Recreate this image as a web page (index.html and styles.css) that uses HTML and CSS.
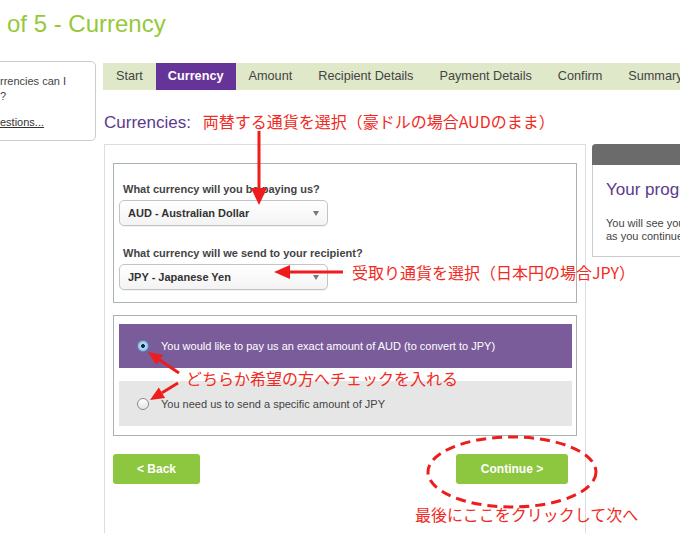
FILE: index.html
```html
<!DOCTYPE html>
<html lang="en">
<head>
  <meta charset="UTF-8">
  <meta name="viewport" content="width=device-width, initial-scale=1.0">
  <title>Currency</title>
  <link rel="stylesheet" href="styles.css">
</head>
<body>
  <h1 class="page-title">of 5 - Currency</h1>

  <div class="layout">
    <!-- Help box on the left -->
    <aside class="help">
      <p>rrencies can I<br>?</p>
      <a href="#">estions...</a>
    </aside>

    <div class="main">
      <!-- Step navigation -->
      <ul class="steps">
        <li>Start</li>
        <li class="active">Currency</li>
        <li>Amount</li>
        <li>Recipient Details</li>
        <li>Payment Details</li>
        <li>Confirm</li>
        <li>Summary</li>
      </ul>

      <h2 class="section-title">Currencies: <span class="note">両替する通貨を選択（豪ドルの場合AUDのまま）</span></h2>

      <div class="columns">
        <div class="panel">
          <div class="box">
            <label>What currency will you be paying us?</label>
            <div class="select"><span>AUD - Australian Dollar</span><span class="caret"></span></div>

            <label class="second">What currency will we send to your recipient?</label>
            <div class="select"><span>JPY - Japanese Yen</span><span class="caret"></span></div>
          </div>

          <div class="box options">
            <div class="option selected"><span class="radio checked"></span>You would like to pay us an exact amount of AUD (to convert to JPY)</div>
            <div class="option"><span class="radio"></span>You need us to send a specific amount of JPY</div>
          </div>

          <div class="buttons">
            <a href="#" class="btn back">&lt; Back</a>
            <a href="#" class="btn next">Continue &gt;</a>
          </div>
        </div>

        <!-- Progress box on the right -->
        <div class="progress">
          <div class="progress-head"></div>
          <h3>Your progress</h3>
          <p>You will see your selections<br>as you continue</p>
        </div>
      </div>
    </div>
  </div>

  <!-- Red annotations drawn over the screenshot -->
  <div class="annotations">
    <svg class="marks" width="680" height="533" viewBox="0 0 680 533">
      <line x1="259" y1="131" x2="259" y2="190" />
      <polygon points="251,188 267,188 259,205" />
      <line x1="343" y1="272" x2="288" y2="272" />
      <polygon points="290,265 290,279 274,272" />
      <line x1="179" y1="373" x2="159.6" y2="359.9" />
      <polygon points="163,354.9 156.2,364.8 148,352" />
      <line x1="178" y1="383" x2="162" y2="392.7" />
      <polygon points="165.1,397.9 158.8,387.6 150,400" />
      <ellipse cx="512" cy="472" rx="84" ry="35" class="ring" />
    </svg>
    <span class="note note-receive">受取り通貨を選択（日本円の場合JPY）</span>
    <span class="note note-check">どちらか希望の方へチェックを入れる</span>
    <span class="note note-next">最後にここをクリックして次へ</span>
  </div>
</body>
</html>
```

FILE: styles.css
```css
html, body {
  margin: 0;
  height: 533px;
  overflow: hidden;
}

body {
  position: relative;
  width: 680px;
  background: #fff;
  font-family: "Liberation Sans", Arial, sans-serif;
  color: #444;
}

.page-title {
  margin: 0;
  padding: 10px 0 0 7px;
  font-size: 24px;
  line-height: 28px;
  font-weight: normal;
  color: #95c93a;
  white-space: nowrap;
}

.layout {
  display: flex;
  margin-top: 23px;
}

/* Help box */
.help {
  flex: 0 0 106px;
  box-sizing: border-box;
  height: 80px;
  margin-left: -10px;
  padding: 12px 0 0 9px;
  border: 1px solid #ccc;
  border-radius: 5px;
  font-size: 11px;
  line-height: 15px;
  color: #444;
}

.help p {
  margin: 0;
}

.help a {
  display: block;
  margin-top: 11px;
  color: #333;
}

.main {
  flex: 0 0 760px;
  margin-left: 7px;
  padding-top: 2px;
}

/* Steps bar */
.steps {
  display: flex;
  margin: 0;
  padding: 0;
  list-style: none;
  height: 27px;
  background-color: #dfe8c9;
  font-size: 12.7px;
  line-height: 27px;
  color: #444;
}

.steps li {
  padding: 0 13px;
  white-space: nowrap;
}

.steps li.active {
  padding: 0 12px;
  background-color: #663399;
  color: #fff;
  font-weight: bold;
}

.section-title {
  margin: 21px 0 11px 1px;
  font-size: 17px;
  line-height: 20px;
  font-weight: normal;
  color: #5b3a8c;
  white-space: nowrap;
}

.note {
  font-family: "Noto Sans CJK JP", sans-serif;
  font-size: 16px;
  line-height: 20px;
  font-weight: normal;
  color: #f22a24;
  white-space: nowrap;
}

.section-title .note {
  margin-left: 7px;
}

.columns {
  display: flex;
  gap: 6px;
  margin-left: 1px;
}

/* Main form panel */
.panel {
  flex: 0 0 482px;
  box-sizing: border-box;
  min-height: 420px;
  padding: 18px 8px 0;
  border: 1px solid #ddd;
  border-bottom: none;
}

.box {
  border: 1px solid #aab3b3;
  padding: 18px 0 12px 5px;
}

.box label {
  display: block;
  padding-left: 4px;
  margin-bottom: 4px;
  font-size: 11px;
  line-height: 14px;
  font-weight: bold;
  color: #444;
}

.box label.second {
  margin-top: 20px;
}

.select {
  display: flex;
  align-items: center;
  justify-content: space-between;
  box-sizing: border-box;
  width: 209px;
  height: 26px;
  padding: 0 8px 0 8px;
  border: 1px solid #c4c4c4;
  border-radius: 5px;
  background: linear-gradient(#fff, #f3f3f3);
  box-shadow: 0 1px 1px rgba(0, 0, 0, 0.06);
  font-size: 11px;
  font-weight: bold;
  color: #333;
}

.caret {
  width: 0;
  height: 0;
  border-top: 5px solid #777;
  border-left: 3.5px solid transparent;
  border-right: 3.5px solid transparent;
}

.options {
  margin-top: 12px;
  padding: 8px 4px 9px 5px;
}

.option {
  display: flex;
  align-items: center;
  height: 44px;
  padding-left: 18px;
  background-color: #e6e6e6;
  font-size: 11px;
  color: #444;
}

.option + .option {
  margin-top: 13px;
  height: 45px;
}

.option.selected {
  background-color: #7b5c9a;
  color: #fff;
}

.radio {
  box-sizing: border-box;
  width: 12px;
  height: 12px;
  margin-right: 12px;
  border: 1px solid #8a8a8a;
  border-radius: 50%;
  background: linear-gradient(#fff, #e4e4e4);
}

.radio.checked {
  border-color: #5b86b3;
  background: radial-gradient(circle, #1d2a3a 0, #1d2a3a 1.6px, #b5daf6 2.2px, #7ab3e4 100%);
}

.buttons {
  display: flex;
  justify-content: space-between;
  margin-top: 18px;
  padding-right: 9px;
}

.btn {
  display: block;
  height: 30px;
  line-height: 30px;
  border-radius: 3px;
  background-color: #8dc63f;
  color: #fff;
  font-size: 12px;
  font-weight: bold;
  text-align: center;
  text-decoration: none;
}

.btn.back {
  width: 87px;
}

.btn.next {
  width: 112px;
}

/* Progress box */
.progress {
  flex: 0 0 200px;
  box-sizing: border-box;
  height: 113px;
  border: 1px solid #ccc;
  border-top: none;
  border-radius: 4px 4px 0 0;
}

.progress-head {
  height: 21px;
  margin: 0 -1px;
  border-radius: 4px 4px 0 0;
  background-color: #6b6b6b;
}

.progress h3 {
  margin: 15px 0 0 13px;
  font-size: 17px;
  line-height: 20px;
  font-weight: normal;
  color: #5b3a8c;
  white-space: nowrap;
}

.progress p {
  margin: 17px 0 0 13px;
  font-size: 11px;
  line-height: 13px;
  color: #444;
  white-space: nowrap;
}

/* Annotation layer */
.annotations {
  position: absolute;
  top: 0;
  left: 0;
  width: 680px;
  height: 533px;
  pointer-events: none;
}

.marks {
  position: absolute;
  top: 0;
  left: 0;
}

.marks line {
  stroke: #ee1c1c;
  stroke-width: 3;
}

.marks polygon {
  fill: #ee1c1c;
}

.marks .ring {
  fill: none;
  stroke: #ee1c1c;
  stroke-width: 3;
  stroke-dasharray: 10 6;
}

.annotations .note {
  position: absolute;
}

.note-receive {
  left: 352px;
  top: 262px;
}

.note-check {
  left: 186px;
  top: 368px;
}

.note-next {
  left: 415px;
  top: 504px;
}
```
